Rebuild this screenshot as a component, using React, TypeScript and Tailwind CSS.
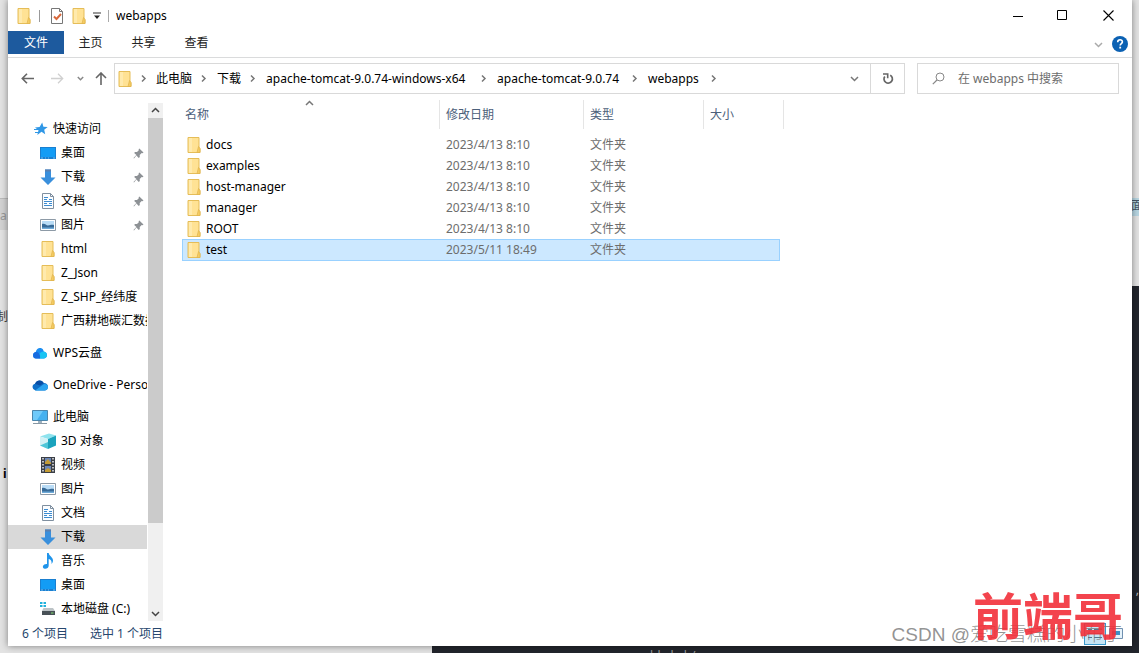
import type { ReactNode } from "react";

function Folder() {
  return (
    <svg width="16" height="18" viewBox="0 0 16 18" className="shrink-0" aria-hidden="true">
      <path d="M2 1.5h11v10.2l1 .8v4h-12z" fill="#ffe294" stroke="#e5bd58" />
      <path d="M3 2h3v14H3z" fill="#ffeaad" />
      <path d="M12.5 10.5l1.5 2v4h-3z" fill="#f5cc62" stroke="#dfb34c" strokeWidth=".7" />
    </svg>
  );
}

function Star() {
  return (
    <svg width="16" height="16" viewBox="0 0 16 16" aria-hidden="true">
      <path d="M10.2 1.500l1.200 4.300 4.300.2-3.500 2.700 1 4.600-3.700-2.600L5.300 14l1.200-4.700L3 6.500l4.600-.6z" fill="#2f97e6" />
      <path d="M2 8.500h4M3 11.500h3" stroke="#2f97e6" strokeWidth="1.200" />
    </svg>
  );
}

function Desktop() {
  return (
    <svg width="16" height="16" viewBox="0 0 16 16" aria-hidden="true">
      <path d="M0 2h16v12H0z" fill="#1a7fd0" />
      <path d="M1 3h14v9H1z" fill="#139cf5" />
      <path d="M1 13h2M5 13h1M8 13h1M13 13h2" stroke="#8cd0ff" strokeWidth=".8" />
    </svg>
  );
}

function Download() {
  return (
    <svg width="16" height="16" viewBox="0 0 16 16" aria-hidden="true">
      <path d="M5 .5h6v8h4.500L8 16 .5 8.500H5z" fill="#398fdc" />
      <path d="M5 .5h6v2H5z" fill="#5a7fae" />
    </svg>
  );
}

function Doc() {
  return (
    <svg width="16" height="16" viewBox="0 0 16 16" aria-hidden="true">
      <path d="M2.500.5h8l3 3v12h-11z" fill="#fbfdff" stroke="#7f8f9f" />
      <path d="M10.500.5v3h3" fill="none" stroke="#7f8f9f" />
      <path d="M4 4.500h4M4 6.500h3M9 6.500h3M4 8.500h8M4 10.500h3M9 10.500h3M4 12.500h8" stroke="#3d8cd0" strokeWidth="1.200" />
    </svg>
  );
}

function Picture() {
  return (
    <svg width="16" height="16" viewBox="0 0 16 16" aria-hidden="true">
      <path d="M.5 2.500h15v11H.5z" fill="#fff" stroke="#8d9aa6" />
      <path d="M2 4h12v8H2z" fill="#b9dcf6" />
      <path d="M2 7c3-1 4 1.500 6 1.500s3-1 6-.5V12H2z" fill="#386b98" />
      <path d="M2 10.500h12V12H2z" fill="#6fabd8" />
    </svg>
  );
}

function Cloud({ wps = false }: { wps?: boolean }) {
  return wps ? (
    <svg width="16" height="16" viewBox="0 0 16 16" aria-hidden="true">
      <path d="M4 13.500a3.300 3.300 0 01-.3-6.500C4.500 4 6.500 2.500 8.700 3c2 .4 2.800 2 3 3.600 2 .3 3.300 1.700 3.300 3.500 0 2-1.500 3.400-3.500 3.400z" fill="#1a8df2" />
      <path d="M8 13.500c-3-3 0-7 3.700-6.900 2 .3 3.300 1.700 3.300 3.500 0 2-1.500 3.400-3.500 3.400z" fill="#19c4f3" />
      <path d="M4 13.500a3.300 3.300 0 01-.3-6.500c3-.3 5 2.500 4.300 6.500z" fill="#176be0" />
    </svg>
  ) : (
    <svg width="16" height="16" viewBox="0 0 16 16" aria-hidden="true">
      <path d="M3.500 13.500A3.500 3.500 0 013 6.700C4.500 3 9.500 2 11.700 6c2.500 0 4.300 1.600 4.300 3.800s-1.600 3.700-3.500 3.700z" fill="#0f6fc8" />
      <path d="M3 13.500l9-6.500c2.500-.3 4 1 4 2.900 0 2.200-1.600 3.600-3.500 3.600z" fill="#2ba3ef" />
      <path d="M3 6.700C4.500 3 9.500 2 11.700 6L8 8.500z" fill="#0a4da4" />
    </svg>
  );
}

function Pc() {
  return (
    <svg width="16" height="16" viewBox="0 0 16 16" aria-hidden="true">
      <path d="M.5 1.500h15v10H.5z" fill="#45b1f0" stroke="#4b86ad" />
      <path d="M1 2h10L5 11H1z" fill="#6fcafa" />
      <path d="M6 12h4v2H6z" fill="#9fb2c0" />
      <path d="M1 14.500h14" stroke="#8797a3" />
    </svg>
  );
}

function Cube() {
  return (
    <svg width="16" height="16" viewBox="0 0 16 16" aria-hidden="true">
      <path d="M0 3.500L9 .5l7 2-8 3.500z" fill="#8ee3ee" />
      <path d="M0 3.500L8 6v10l-8-3.500z" fill="#d3f1f5" />
      <path d="M16 2.500L8 6v10l8-3.500z" fill="#1aa3bd" />
      <path d="M0 12.500L8 9v7z" fill="#4fc6d8" />
    </svg>
  );
}

function Film() {
  return (
    <svg width="16" height="16" viewBox="0 0 16 16" aria-hidden="true">
      <path d="M1 0h14v16H1z" fill="#3b3f46" />
      <path d="M5 1h6v6H5zM5 9h6v6H5z" fill="#6b87b9" />
      <path d="M5 5l3-3 3 4v1H5zM5 13l3-2 3 2v2H5z" fill="#c49c35" />
      <path d="M3 1v14M13 1v14" stroke="#e8eaee" strokeWidth="1.500" strokeDasharray="1.500 1.500" />
    </svg>
  );
}

function Music() {
  return (
    <svg width="16" height="16" viewBox="0 0 16 16" aria-hidden="true">
      <path d="M7 0h1.700c.3 3 4.300 4 4.300 7.500 0 1.500-.7 2.700-1.500 3.500.5-3-.8-4.500-2.800-5v6.500C8.700 15 6.500 16 4.800 15.700 3.300 15.500 2.500 14.500 3 13c.6-1.500 2.400-2.300 4-2z" fill="#1f94ea" />
    </svg>
  );
}

function Drive() {
  return (
    <svg width="16" height="16" viewBox="0 0 16 16" aria-hidden="true">
      <path d="M0 1h2.500v2H0zM3.500 1H6v2H3.500zM0 4h2.500v2H0zM3.500 4H6v2H3.500z" fill="#20b1dc" />
      <path d="M3.500 7h9.500l2 3H2z" fill="#bcc3c6" />
      <path d="M2 10h13v4H2z" fill="#485157" />
      <path d="M11 12h2.500" stroke="#80e070" />
    </svg>
  );
}

function Pin() {
  return (
    <svg width="11" height="11" viewBox="0 0 11 11" className="mr-[3px] ml-auto shrink-0" aria-hidden="true">
      <path d="M6.300.5l4.200 4-1 .8-.8-.2-2 2 .1 2-1 .8-2.400-2.300L1 10.500.5 10l2.900-2.900L1.200 4.900l.8-.9 2 .1 2-2-.5-.8z" fill="#8d9195" />
    </svg>
  );
}

function Chevron({ dir, className = "text-[#777]" }: { dir: "up" | "down" | "right"; className?: string }) {
  const d = { up: "M1 6l3.500-3.500L8 6", down: "M1 3l3.500 3.500L8 3", right: "M3 1.500L6 4.500 3 7.500" }[dir];
  return (
    <svg width="9" height="9" viewBox="0 0 9 9" className={`shrink-0 ${className}`} aria-hidden="true">
      <path d={d} fill="none" stroke="currentColor" strokeWidth="1.500" />
    </svg>
  );
}

type Item = { label: string; icon: ReactNode; pinned?: boolean; current?: boolean };

const groups: { head: Item; items: Item[] }[] = [
  {
    head: { label: "快速访问", icon: <Star /> },
    items: [
      { label: "桌面", icon: <Desktop />, pinned: true },
      { label: "下载", icon: <Download />, pinned: true },
      { label: "文档", icon: <Doc />, pinned: true },
      { label: "图片", icon: <Picture />, pinned: true },
      { label: "html", icon: <Folder /> },
      { label: "Z_Json", icon: <Folder /> },
      { label: "Z_SHP_经纬度", icon: <Folder /> },
      { label: "广西耕地碳汇数据", icon: <Folder /> },
    ],
  },
  { head: { label: "WPS云盘", icon: <Cloud wps /> }, items: [] },
  { head: { label: "OneDrive - Personal", icon: <Cloud /> }, items: [] },
  {
    head: { label: "此电脑", icon: <Pc /> },
    items: [
      { label: "3D 对象", icon: <Cube /> },
      { label: "视频", icon: <Film /> },
      { label: "图片", icon: <Picture /> },
      { label: "文档", icon: <Doc /> },
      { label: "下载", icon: <Download />, current: true },
      { label: "音乐", icon: <Music /> },
      { label: "桌面", icon: <Desktop /> },
      { label: "本地磁盘 (C:)", icon: <Drive /> },
    ],
  },
];

const files = [
  ["docs", "2023/4/13 8:10"],
  ["examples", "2023/4/13 8:10"],
  ["host-manager", "2023/4/13 8:10"],
  ["manager", "2023/4/13 8:10"],
  ["ROOT", "2023/4/13 8:10"],
  ["test", "2023/5/11 18:49"],
];

const crumbs = [
  { label: "此电脑", width: "min-w-9" },
  { label: "下载", width: "min-w-6" },
  { label: "apache-tomcat-9.0.74-windows-x64", width: "min-w-[206px]" },
  { label: "apache-tomcat-9.0.74", width: "min-w-[126px]" },
  { label: "webapps", width: "min-w-[54px]" },
];

function NavRow({ item, nested = false }: { item: Item; nested?: boolean }) {
  return (
    <button
      type="button"
      className={`flex h-6 w-full items-center gap-[5px] text-left whitespace-nowrap ${nested ? "pl-8" : "pl-6"} ${item.current ? "bg-[#d9d9d9]" : ""}`}
    >
      <span className="flex w-4 shrink-0 justify-center">{item.icon}</span>
      <span>{item.label}</span>
      {item.pinned && <Pin />}
    </button>
  );
}

function Backdrop() {
  return (
    <div className="absolute inset-0 overflow-hidden bg-[#e3e3e3] font-['Noto_Sans','Noto_Sans_CJK_SC',sans-serif] text-xs text-[#444]" aria-hidden="true">
      <div className="absolute top-[198px] left-0 h-8 w-2 border-t border-[#bbb] bg-[#d2d2d2]" />
      <span className="absolute top-[208px] left-0 text-[#999]">a</span>
      <span className="absolute top-[309px] -left-[16px]">复制</span>
      <span className="absolute top-[466px] left-[3px] font-bold text-black">i</span>
      <div className="absolute top-[198px] right-0 h-[18px] w-2 overflow-hidden bg-[#b8d6e2] text-[#456]">面</div>
      <div className="absolute top-[286px] right-0 bottom-0 w-3 bg-[#22252c]" />
      <div className="absolute right-0 bottom-0 left-[432px] h-3 bg-[#22252c]" />
      <span className="absolute top-[582px] right-0 text-[#bbb]">,</span>
      <span className="absolute top-[648px] left-[650px] text-[#999]">bbchch/</span>
      <span className="absolute top-[650px] left-[25px] text-[#a33]">^</span>
    </div>
  );
}

export default function App() {
  return (
    <div className="relative flex h-screen pr-[7px] pb-[7px] pl-2 font-['Noto_Sans','Noto_Sans_CJK_SC',sans-serif] text-xs text-black">
      <Backdrop />
      <main className="relative flex min-w-0 flex-1 flex-col bg-white shadow-[0_0_7px_rgba(0,0,0,0.45)]">
        <header>
          <div className="flex h-[31px] items-center pl-2">
            <Folder />
            <span className="mx-[7px] h-3 w-px bg-[#999]" />
            <button type="button" aria-label="属性" className="ml-[3px]">
              <svg width="14" height="16" viewBox="0 0 14 16" className="block">
                <path d="M1.500.5h8l3 3v12h-11z" fill="#fff" stroke="#777" />
                <path d="M9.500.5v3h3" fill="none" stroke="#777" />
                <path d="M4 8.500l2.500 2.500L11 6" fill="none" stroke="#d8693c" strokeWidth="2" />
              </svg>
            </button>
            <button type="button" aria-label="新建文件夹" className="ml-[7px]"><Folder /></button>
            <button type="button" aria-label="自定义快速访问工具栏" className="ml-[6px]">
              <svg width="8" height="8" viewBox="0 0 8 8" className="block">
                <path d="M0 1h8" stroke="#333" />
                <path d="M1 3.500h6L4 7z" fill="#222" />
              </svg>
            </button>
            <span className="mx-[7px] h-3 w-px bg-[#aaa]" />
            <h1>webapps</h1>
            <div className="ml-auto flex h-full">
              <button type="button" aria-label="最小化" className="flex w-[45px] items-center justify-center">
                <svg width="10" height="10"><path d="M0 5.500h10" stroke="#000" /></svg>
              </button>
              <button type="button" aria-label="最大化" className="flex w-[45px] items-center justify-center">
                <svg width="11" height="11"><path d="M.5.5h9v9H.5z" fill="none" stroke="#000" /></svg>
              </button>
              <button type="button" aria-label="关闭" className="flex w-[47px] items-center justify-center">
                <svg width="11" height="11"><path d="M.5.5l10 10M10.500.5l-10 10" stroke="#000" strokeWidth="1.100" /></svg>
              </button>
            </div>
          </div>
          <div className="flex h-[27px] items-start border-b border-[#dadbdc]">
            <button type="button" className="h-[23px] w-14 bg-[#1d5a9e] text-white">文件</button>
            <button type="button" className="h-6 w-[53px] text-[#222]">主页</button>
            <button type="button" className="h-6 w-[53px] text-[#222]">共享</button>
            <button type="button" className="h-6 w-[53px] text-[#222]">查看</button>
            <button type="button" aria-label="展开功能区" className="mr-[9px] ml-auto flex h-[26px] items-center">
              <Chevron dir="down" className="text-[#aaa]" />
            </button>
            <button type="button" aria-label="帮助" className="mt-[5px] mr-1 flex">
              <svg width="16" height="16" viewBox="0 0 16 16">
                <circle cx="8" cy="8" r="8" fill="#0b61b3" />
                <path d="M5.700 6.200c0-3.300 4.900-3 4.700-.3-.1 1.700-2.200 1.700-2.200 3.500" fill="none" stroke="#fff" strokeWidth="1.600" />
                <path d="M7.300 10.700h1.800v1.800H7.300z" fill="#fff" />
              </svg>
            </button>
          </div>
        </header>

        <div className="flex h-[42px] shrink-0 items-start pt-[5px] pr-[13px]">
          <div className="flex h-[31px] w-[106px] shrink-0 items-center pl-[13px] text-[#666]">
            <button type="button" aria-label="后退">
              <svg width="13" height="11" viewBox="0 0 13 11"><path d="M6 .8L1.300 5.500 6 10.200M1.500 5.500H13" fill="none" stroke="currentColor" strokeWidth="1.600" /></svg>
            </button>
            <button type="button" aria-label="前进" className="ml-[17px] text-[#d0d0d0]">
              <svg width="13" height="11" viewBox="0 0 13 11"><path d="M7 .8l4.700 4.700L7 10.200M11.500 5.500H0" fill="none" stroke="currentColor" strokeWidth="1.300" /></svg>
            </button>
            <button type="button" aria-label="最近浏览的位置" className="ml-[13px]">
              <svg width="7" height="7" viewBox="0 0 7 7"><path d="M.8 2l2.700 2.700L6.200 2" fill="none" stroke="#888" strokeWidth="1.500" /></svg>
            </button>
            <button type="button" aria-label="上移" className="ml-[11px]">
              <svg width="12" height="13" viewBox="0 0 12 13"><path d="M1 6l5-5 5 5M6 1.500V13" fill="none" stroke="currentColor" strokeWidth="1.600" /></svg>
            </button>
          </div>
          <div className="flex h-[31px] min-w-0 flex-1 items-center border border-[#d9d9d9] pl-[2px]">
            <Folder />
            <nav aria-label="路径" className="flex min-w-0 items-center overflow-hidden whitespace-nowrap">
              <span className="flex w-[23px] pl-[6px]"><Chevron dir="right" /></span>
              {crumbs.map((c) => (
                <span key={c.label} className="flex items-center">
                  <a href="#" className={c.width}>{c.label}</a>
                  <span className="flex w-[25px] pl-[7px]"><Chevron dir="right" /></span>
                </span>
              ))}
            </nav>
            <button type="button" aria-label="以前的位置" className="ml-auto flex w-8 justify-center"><Chevron dir="down" /></button>
            <button type="button" aria-label="刷新" className="flex h-full w-[34px] items-center justify-center border-l border-[#d9d9d9]">
              <svg width="12" height="13" viewBox="0 0 12 13">
                <path d="M8.200 3.200A4.200 4.200 0 112.800 4.400" fill="none" stroke="#666" strokeWidth="1.700" />
                <path d="M1 2h4.700v4.200" fill="none" stroke="#666" strokeWidth="1.600" />
              </svg>
            </button>
          </div>
          <label className="ml-3 flex h-[31px] w-[202px] shrink-0 items-center border border-[#d9d9d9] pl-[14px]">
            <svg width="13" height="13" viewBox="0 0 13 13" className="shrink-0">
              <circle cx="8" cy="5" r="4" fill="none" stroke="#888" />
              <path d="M5 8L.8 12.200" stroke="#888" strokeWidth="1.200" />
            </svg>
            <input type="search" aria-label="搜索" placeholder="在 webapps 中搜索" className="ml-[13px] w-full min-w-0 outline-none placeholder:text-[#6d6d6d]" />
          </label>
        </div>

        <div className="flex min-h-0 flex-1">
          <nav aria-label="文件夹" className="mt-[3px] flex w-[139px] shrink-0 flex-col gap-2 overflow-hidden pt-[14px]">
            {groups.map((g) => (
              <div key={g.head.label} className="shrink-0">
                <NavRow item={g.head} />
                {g.items.map((item) => <NavRow key={item.label} item={item} nested />)}
              </div>
            ))}
          </nav>
          <div className="mt-[3px] ml-px flex w-[15px] shrink-0 flex-col items-center bg-[#f0f0f0]" aria-hidden="true">
            <span className="flex h-[15px] items-center"><Chevron dir="up" className="text-[#444]" /></span>
            <span className="w-full grow-[405] bg-[#cbcbcb]" />
            <span className="grow-[83]" />
            <span className="flex h-[15px] items-center"><Chevron dir="down" className="text-[#444]" /></span>
          </div>
          <section className="min-w-0 flex-1 overflow-hidden pl-[19px]">
            <table className="w-[602px] table-fixed border-separate border-spacing-0 text-left text-[#6d6d6d]">
              <colgroup>
                <col className="w-[258px]" />
                <col className="w-36" />
                <col className="w-[120px]" />
                <col className="w-[76px]" />
                <col className="w-1" />
              </colgroup>
              <thead className="text-[#4c607a]">
                <tr className="h-[29px]">
                  <th scope="col" className="border-r border-[#e5e5e5] p-0 pl-[3px] font-normal">
                    <span className="relative block">
                      名称
                      <span className="absolute -top-2 left-[120px]"><Chevron dir="up" /></span>
                    </span>
                  </th>
                  <th scope="col" className="border-r border-[#e5e5e5] p-0 pl-[6px] font-normal">修改日期</th>
                  <th scope="col" className="border-r border-[#e5e5e5] p-0 pl-[6px] font-normal">类型</th>
                  <th scope="col" className="p-0 pl-[6px] font-normal">大小</th>
                  <th className="border-r border-[#e5e5e5] p-0" />
                </tr>
              </thead>
              <tbody>
                <tr className="h-[5px]"><td colSpan={5} className="p-0" /></tr>
                {files.map(([name, date]) => {
                  const cell = name === "test" ? "h-[22px] border-y border-[#99d1ff] bg-[#cce8ff] p-0" : "h-[21px] p-0";
                  return (
                    <tr key={name}>
                      <td className={`${cell} ${name === "test" ? "border-l pl-[3px]" : "pl-1"}`}>
                        <span className="flex items-center gap-1 text-black"><Folder />{name}</span>
                      </td>
                      <td className={`${cell} pl-[6px]`}>{date}</td>
                      <td className={`${cell} pl-[6px]`}>文件夹</td>
                      <td className={`${cell} ${name === "test" ? "border-r" : ""}`} />
                      <td className="p-0" />
                    </tr>
                  );
                })}
              </tbody>
            </table>
          </section>
        </div>

        <footer className="flex h-[25px] shrink-0 items-center gap-[22px] pl-[14px] text-[#26466d]">
          <span>6 个项目</span>
          <span>选中 1 个项目</span>
          <div className="mr-2 ml-auto flex items-center gap-[2px]">
            <button type="button" aria-label="详细信息" className="flex h-[22px] w-[22px] items-center justify-center border border-[#3a98cc] bg-[#c6e5f5]">
              <svg width="14" height="12"><path d="M0 1.500h4M6 1.500h8M0 5.500h4M6 5.500h8M0 9.500h4M6 9.500h8" stroke="#53758e" /></svg>
            </button>
            <button type="button" aria-label="大图标" className="flex h-[22px] w-4 items-center justify-center">
              <svg width="14" height="11"><path d="M.5.5h13v10H.5z" fill="#e5f2fa" stroke="#7090b0" /><path d="M3 3h8v4H3z" fill="#3d8fc5" /></svg>
            </button>
          </div>
        </footer>
      </main>
      <div className="pointer-events-none absolute right-[17px] bottom-[6px] font-['Liberation_Sans','Noto_Sans_CJK_SC',sans-serif] text-[19px] leading-6 font-light whitespace-nowrap text-[#777]/80">CSDN @爱吃雪糕的小布丁</div>
      <div className="pointer-events-none absolute right-4 bottom-[14px] font-['Noto_Sans_CJK_SC',sans-serif] text-[50px] leading-[52px] font-bold whitespace-nowrap text-[#f2303a]/90">前端哥</div>
    </div>
  );
}
